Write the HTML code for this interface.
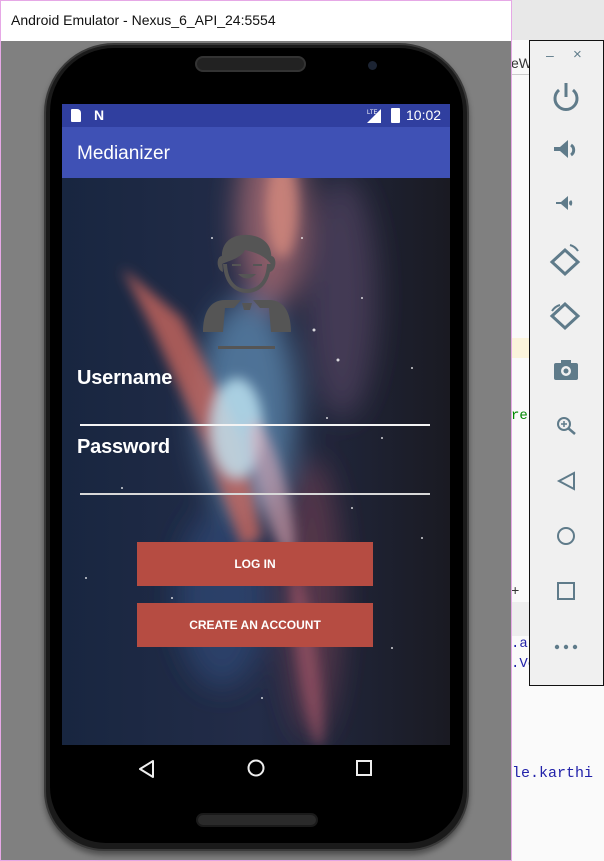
<!DOCTYPE html>
<html><head><meta charset="utf-8"><style>
*{margin:0;padding:0;box-sizing:border-box}
body{width:604px;height:861px;overflow:hidden;background:#fff;font-family:"Liberation Sans",sans-serif;position:relative}
.abs{position:absolute}
</style></head><body>
<div class="abs" style="left:511px;top:0;width:93px;height:861px;background:#fafafa"></div>
<div class="abs" style="left:511px;top:0;width:93px;height:40px;background:#e8e8e8"></div>
<div class="abs" style="left:511px;top:55px;width:30px;height:20px;font:14px 'Liberation Sans';color:#333">eW</div>
<div class="abs" style="left:511px;top:74px;width:93px;height:1px;background:#ccc"></div>
<div class="abs" style="left:511px;top:338px;width:30px;height:20px;background:#fbf4dc"></div>
<div class="abs" style="left:511px;top:408px;font:14px 'Liberation Mono';color:#080">re</div>
<div class="abs" style="left:511px;top:584px;font:14px 'Liberation Mono';color:#333">+</div>
<div class="abs" style="left:511px;top:602px;width:30px;height:34px;background:#eee"></div>
<div class="abs" style="left:511px;top:636px;font:14px 'Liberation Mono';color:#22a">.a</div>
<div class="abs" style="left:511px;top:656px;font:14px 'Liberation Mono';color:#22a">.Ve</div>
<div class="abs" style="left:503px;top:765px;font:15px 'Liberation Mono';color:#22a">ple.karthi</div>
<div class="abs" style="left:0;top:0;width:512px;height:861px;border:1px solid #e6a8e6;background:#808080">
  <div style="height:40px;background:#fff;padding:11px 0 0 10px;font-size:14px;color:#111">Android Emulator - Nexus_6_API_24:5554</div>
</div>
<div class="abs" style="left:44px;top:43px;width:425px;height:808px;border-radius:70px 70px 60px 60px;background:#1a1a1a;border:2px solid #3a3a3a;box-shadow:0 4px 6px rgba(0,0,0,.4)"></div>
<div class="abs" style="left:50px;top:48px;width:413px;height:795px;border-radius:64px 64px 56px 56px;background:#000"></div>
<div class="abs" style="left:195px;top:56px;width:111px;height:16px;border-radius:8px;background:#222;border:2px solid #333"></div>
<div class="abs" style="left:368px;top:61px;width:9px;height:9px;border-radius:50%;background:#1c2433"></div>
<div class="abs" style="left:196px;top:813px;width:122px;height:14px;border-radius:7px;background:#2a2a2a;border:2px solid #1a1a1a"></div>
<div class="abs" style="left:62px;top:104px;width:388px;height:23px;background:#303F9F;color:#fff">
  <div class="abs" style="left:9px;top:5px;width:10px;height:13px;background:#fff;border-radius:1px 4px 1px 1px"></div>
  <div class="abs" style="left:32px;top:3px;font:bold 14px 'Liberation Sans'">N</div>
  <svg class="abs" style="left:305px;top:3px" width="14" height="16"><polygon points="14,2 14,16 0,16" fill="#fff"/><text x="0" y="7" font-size="6" fill="#fff" font-family="Liberation Sans">LTE</text></svg>
  <div class="abs" style="left:329px;top:4px;width:9px;height:15px;background:#fff;border-radius:1px"></div>
  <div class="abs" style="left:344px;top:3px;font-size:14px">10:02</div>
</div>
<div class="abs" style="left:62px;top:127px;width:388px;height:51px;background:#3F51B5;color:#fff;font-size:19px;padding:16px 0 0 15px">Medianizer</div>
<div class="abs" style="left:62px;top:178px;width:388px;height:567px;overflow:hidden;background:#1a2036">
<svg width="388" height="567" style="position:absolute;left:0;top:0">
<defs>
<filter id="b1" x="-50%" y="-50%" width="200%" height="200%"><feGaussianBlur stdDeviation="14"/></filter>
<filter id="b2" x="-50%" y="-50%" width="200%" height="200%"><feGaussianBlur stdDeviation="6"/></filter>
<linearGradient id="bg" x1="0" x2="1"><stop offset="0" stop-color="#182640"/><stop offset=".5" stop-color="#232c48"/><stop offset="1" stop-color="#1a1a22"/></linearGradient>
</defs>
<rect width="388" height="567" fill="url(#bg)"/>
<g filter="url(#b1)">
<ellipse cx="210" cy="40" rx="35" ry="90" fill="#b87276" opacity=".7"/>
<ellipse cx="280" cy="120" rx="35" ry="120" fill="#5a4a68" opacity=".6"/>
<ellipse cx="185" cy="230" rx="50" ry="110" fill="#5f90b8" opacity=".7"/>
<ellipse cx="160" cy="420" rx="45" ry="90" fill="#2e4a78" opacity=".7"/>
<ellipse cx="250" cy="420" rx="30" ry="140" fill="#6a3a4e" opacity=".7"/>
</g>
<g filter="url(#b2)">
<path d="M60 90 L120 140 L180 260 L200 360 L180 370 L140 260 L90 150 Z" fill="#c8665c" opacity=".8"/>
<ellipse cx="175" cy="250" rx="26" ry="50" fill="#bfe6f4" opacity=".8"/>
<ellipse cx="210" cy="310" rx="14" ry="70" fill="#e0aab8" opacity=".6" transform="rotate(-15 210 310)"/>
<ellipse cx="245" cy="480" rx="10" ry="90" fill="#a8586a" opacity=".6" transform="rotate(-8 245 480)"/>
<ellipse cx="220" cy="30" rx="16" ry="50" fill="#e09080" opacity=".7"/>
</g>
<g fill="#fff" opacity=".8">
<circle cx="252" cy="152" r="1.5"/><circle cx="276" cy="182" r="1.5"/><circle cx="300" cy="120" r="1"/><circle cx="320" cy="260" r="1"/><circle cx="240" cy="60" r="1"/><circle cx="350" cy="190" r="1"/><circle cx="290" cy="330" r="1"/><circle cx="110" cy="420" r="1"/><circle cx="60" cy="310" r="1"/><circle cx="330" cy="470" r="1"/><circle cx="200" cy="520" r="1"/><circle cx="150" cy="60" r="1"/><circle cx="360" cy="360" r="1"/><circle cx="24" cy="400" r="1"/><circle cx="265" cy="240" r="1"/>
</g>
</svg>
<svg class="abs" style="left:139px;top:56px" width="92" height="118" viewBox="0 0 92 118">
<g fill="#555">
<path d="M21 26 C19 6 34 0 47 1 C63 2 72 12 70 26 L70 30 C62 20 52 18 44 16 C40 24 30 26 21 30 Z"/>
<path d="M21 22 C15 22 15 36 22 38 Z"/><path d="M70 22 C76 22 76 36 69 38 Z"/>
<path d="M22 30 C23 50 34 59 46 59 C58 59 69 50 70 30 L66 30 C65 48 56 55 46 55 C36 55 27 48 26 30 Z"/>
<rect x="31" y="30" width="9" height="2"/><rect x="52" y="30" width="9" height="2"/>
<path d="M37 40 Q46 49 55 40 Z"/>
<path d="M2 98 C2 80 8 66 24 66 L40 66 L33 74 L24 74 L22 98 Z"/>
<path d="M90 98 C90 80 84 66 68 66 L52 66 L59 74 L68 74 L70 98 Z"/>
<path d="M41 69 L51 69 L49 76 L43 76 Z"/>
<rect x="17" y="112" width="57" height="3"/>
</g>
</svg>
<div class="abs" style="left:15px;top:189px;color:#fff;font-size:20px;font-weight:bold;letter-spacing:-.2px">Username</div>
<div class="abs" style="left:18px;top:246px;width:350px;height:2px;background:#f4f4f4"></div>
<div class="abs" style="left:15px;top:258px;color:#fff;font-size:20px;font-weight:bold;letter-spacing:-.2px">Password</div>
<div class="abs" style="left:18px;top:315px;width:350px;height:2px;background:#d8d8d8"></div>
<div class="abs" style="left:75px;top:364px;width:236px;height:44px;background:#B64C42;color:#fff;font-size:12px;font-weight:bold;text-align:center;line-height:44px">LOG IN</div>
<div class="abs" style="left:75px;top:425px;width:236px;height:44px;background:#B64C42;color:#fff;font-size:12px;font-weight:bold;text-align:center;line-height:44px">CREATE AN ACCOUNT</div>
</div>
<svg class="abs" style="left:62px;top:745px" width="388" height="46">
<polygon points="91,16 91,32 78,24" fill="none" stroke="#eee" stroke-width="2" stroke-linejoin="round"/>
<circle cx="194" cy="23" r="7.5" fill="none" stroke="#eee" stroke-width="2"/>
<rect x="295" y="16" width="14" height="14" fill="none" stroke="#eee" stroke-width="2"/>
</svg>
<div class="abs" style="left:529px;top:40px;width:75px;height:646px;background:#f0f0f0;border:1px solid #111"></div>
<div class="abs" style="left:546px;top:47px;color:#607d8b;font-size:14px">–</div>
<div class="abs" style="left:573px;top:46px;color:#607d8b;font-size:15px">×</div>
<svg class="abs" style="left:530px;top:75px" width="73" height="600" fill="#5f7b8a" stroke="#5f7b8a">
<g fill="none" stroke-width="3"><path d="M29 15 A11 11 0 1 0 43 15"/><line x1="36" y1="8" x2="36" y2="22"/></g>
<path d="M24 72 h6 l8 -7 v18 l-8 -7 h-6z" stroke="none"/><path d="M41 70 a6 6 0 0 1 0 10" fill="none" stroke-width="3"/>
<path d="M26 127 h5 l7 -6 v14 l-7 -6 h-5z" stroke="none"/><path d="M40 126 a3 3 0 0 1 0 4" fill="none" stroke-width="3"/>
<path d="M22 187 L35 175 L48 187 L35 199 Z" fill="none" stroke-width="3"/><path d="M40 170 a14 14 0 0 1 8 6" fill="none" stroke-width="2"/>
<path d="M22 241 L35 229 L48 241 L35 253 Z" fill="none" stroke-width="3"/><path d="M22 236 a14 14 0 0 1 8 -6" fill="none" stroke-width="2"/>
<rect x="24" y="288" width="24" height="17" rx="2" stroke="none"/><rect x="31" y="285" width="10" height="4" stroke="none"/><circle cx="36" cy="296" r="5" fill="#f0f0f0" stroke="none"/><circle cx="36" cy="296" r="2.5" stroke="none"/>
<circle cx="34" cy="349" r="6" fill="none" stroke-width="2"/><line x1="38" y1="353" x2="45" y2="359" stroke-width="2.5"/><path d="M31 349h6M34 346v6" stroke-width="1.5"/>
<polygon points="44,398 44,414 29,406" fill="none" stroke-width="2"/>
<circle cx="36" cy="461" r="8" fill="none" stroke-width="2"/>
<rect x="28" y="508" width="16" height="16" fill="none" stroke-width="2"/>
<circle cx="27" cy="572" r="2.2" stroke="none"/><circle cx="36" cy="572" r="2.2" stroke="none"/><circle cx="45" cy="572" r="2.2" stroke="none"/>
</svg>
</body></html>
